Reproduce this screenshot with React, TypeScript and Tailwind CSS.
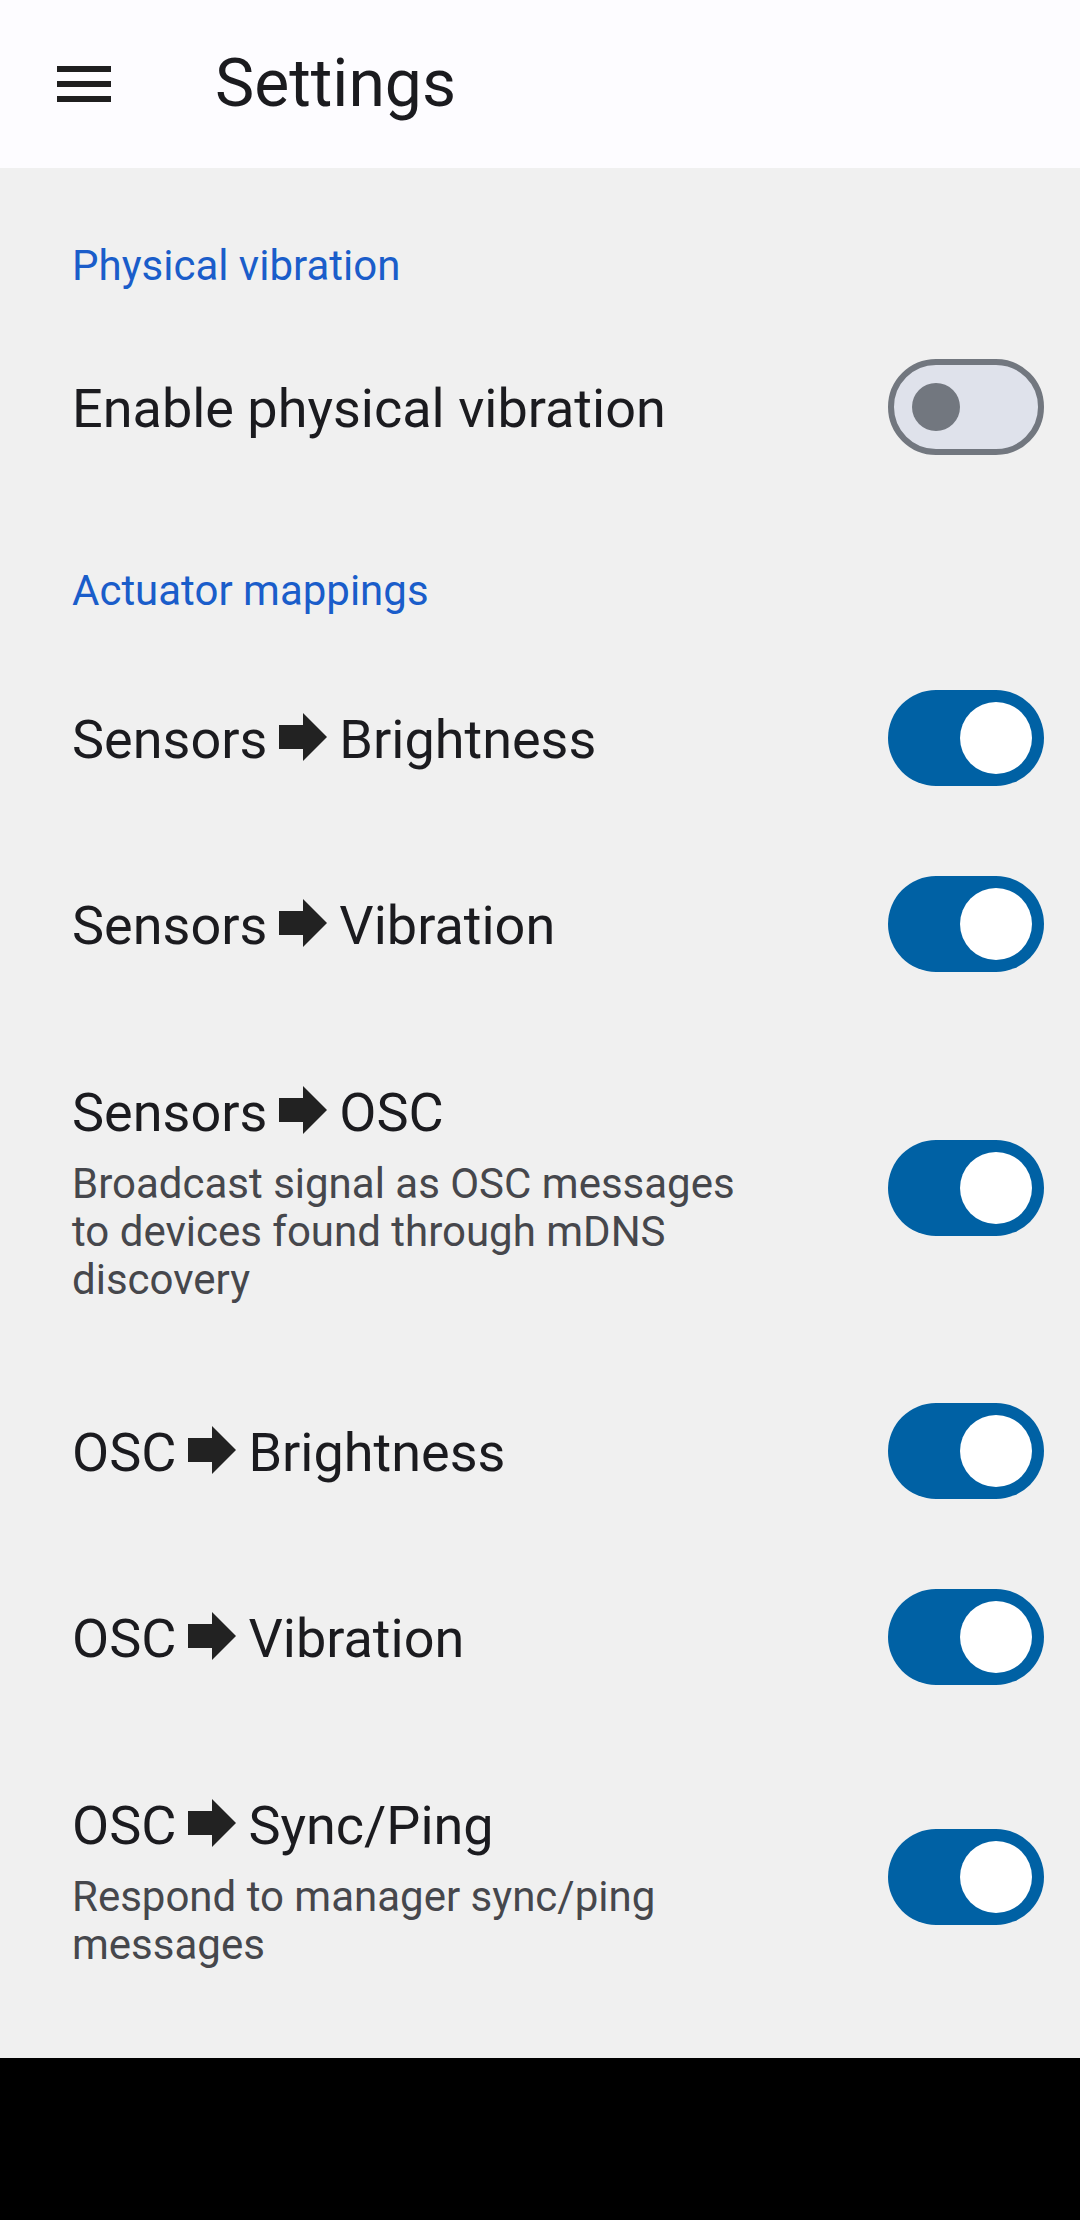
import React from 'react';

const font = "font-['Roboto','Noto_Sans',sans-serif]";

function MenuIcon() {
  return (
    <svg width="72" height="72" viewBox="0 0 24 24" fill="#1f1f1f">
      <rect x="3" y="6" width="18" height="2" />
      <rect x="3" y="11" width="18" height="2" />
      <rect x="3" y="16" width="18" height="2" />
    </svg>
  );
}

function Arrow() {
  return (
    <svg width="48" height="48" viewBox="0 0 48 48" className="mx-[12px] inline-block align-[-3px]" fill="#222222">
      <rect x="0" y="12" width="25" height="24" />
      <polygon points="24,0 48,24 24,48" />
    </svg>
  );
}

function Toggle({ on }: { on: boolean }) {
  if (on) {
    return (
      <div className="flex h-[96px] w-[156px] shrink-0 items-center justify-end rounded-full bg-[#0061a4] pr-[12px]">
        <div className="h-[72px] w-[72px] rounded-full bg-white" />
      </div>
    );
  }
  return (
    <div className="flex h-[96px] w-[156px] shrink-0 items-center rounded-full border-[6px] border-[#72777f] bg-[#dfe2eb] pl-[18px]">
      <div className="h-[48px] w-[48px] rounded-full bg-[#72777f]" />
    </div>
  );
}

function SectionHeader({ title, className }: { title: string; className: string }) {
  return <div className={`px-[72px] text-[42px] leading-[60px] text-[#1a5dca] ${className}`}>{title}</div>;
}

interface RowProps {
  from: string;
  to?: string;
  subtitle?: string;
  on: boolean;
}

function Row({ from, to, subtitle, on }: RowProps) {
  return (
    <div className={`flex items-center justify-between pl-[72px] pr-[36px] ${subtitle ? '' : 'h-[186px]'}`}>
      <div className={`w-[680px] ${subtitle ? 'pt-[64px] pb-[54px]' : 'pt-[4px]'}`}>
        <div className="text-[54px] leading-[64px] whitespace-nowrap text-[#1b1b1f]">
          {from}
          {to && (
            <>
              <Arrow />
              {to}
            </>
          )}
        </div>
        {subtitle && <div className="mt-[15px] text-[42px] leading-[48px] text-[#46474c]">{subtitle}</div>}
      </div>
      <Toggle on={on} />
    </div>
  );
}

export default function App() {
  return (
    <div className={`flex h-[2220px] w-[1080px] flex-col ${font}`}>
      <header className="flex h-[168px] shrink-0 items-center bg-[#fdfcff] pl-[48px]">
        <MenuIcon />
        <h1 className="ml-[95px] text-[66px] leading-[80px] text-[#1b1b1f]">Settings</h1>
      </header>

      <main className="flex-1 bg-[#f0f0f0]">
        <SectionHeader title="Physical vibration" className="mt-[68px]" />
        <div className="mt-[18px]">
          <Row from="Enable physical vibration" on={false} />
        </div>

        <SectionHeader title="Actuator mappings" className="mt-[61px]" />
        <div className="mt-[24px]">
          <Row from="Sensors" to="Brightness" on />
          <Row from="Sensors" to="Vibration" on />
          <Row
            from="Sensors"
            to="OSC"
            subtitle="Broadcast signal as OSC messages to devices found through mDNS discovery"
            on
          />
          <Row from="OSC" to="Brightness" on />
          <Row from="OSC" to="Vibration" on />
          <Row from="OSC" to="Sync/Ping" subtitle="Respond to manager sync/ping messages" on />
        </div>
      </main>

      <div className="h-[162px] shrink-0 bg-black" />
    </div>
  );
}
